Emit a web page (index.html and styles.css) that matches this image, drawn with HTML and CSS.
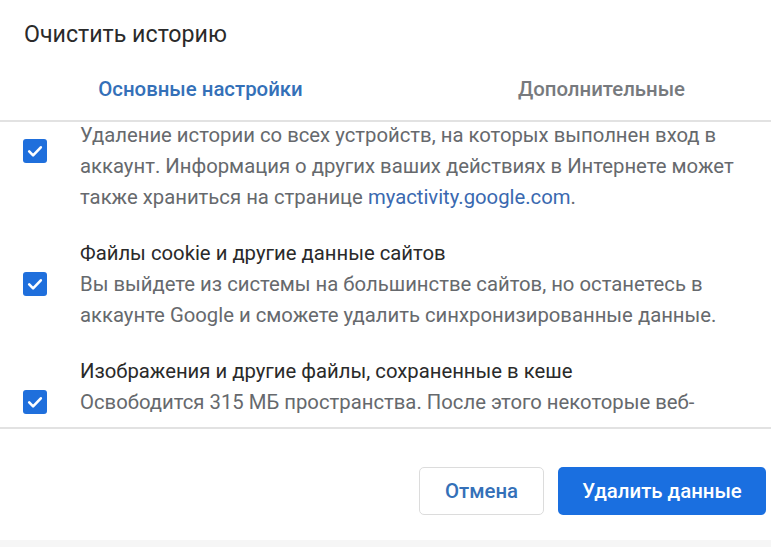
FILE: index.html
```html
<!DOCTYPE html>
<html lang="ru">
<head>
<meta charset="utf-8">
<title>Очистить историю</title>
<link rel="stylesheet" href="styles.css">
</head>
<body>
<div class="dialog">
  <h1 class="title">Очистить историю</h1>
  <div class="tabs">
    <div class="tab tab-active">Основные настройки</div>
    <div class="tab">Дополнительные</div>
  </div>
  <div class="viewport">
    <div class="list">
      <div class="item">
        <span class="check"><svg viewBox="0 0 24 24" width="24" height="24"><path d="M6.2 12.4l3.9 3.9 7.7-8" fill="none" stroke="#fff" stroke-width="2.6" stroke-linecap="round" stroke-linejoin="round"/></svg></span>
        <div class="text">
          <div class="label">История браузера</div>
          <div class="desc">Удаление истории со всех устройств, на которых выполнен вход в аккаунт. Информация о других ваших действиях в Интернете может также храниться на странице <a class="link" href="#">myactivity.google.com</a>.</div>
        </div>
      </div>
      <div class="item">
        <span class="check"><svg viewBox="0 0 24 24" width="24" height="24"><path d="M6.2 12.4l3.9 3.9 7.7-8" fill="none" stroke="#fff" stroke-width="2.6" stroke-linecap="round" stroke-linejoin="round"/></svg></span>
        <div class="text">
          <div class="label">Файлы cookie и другие данные сайтов</div>
          <div class="desc">Вы выйдете из системы на большинстве сайтов, но останетесь в аккаунте Google и сможете удалить синхронизированные данные.</div>
        </div>
      </div>
      <div class="item">
        <span class="check"><svg viewBox="0 0 24 24" width="24" height="24"><path d="M6.2 12.4l3.9 3.9 7.7-8" fill="none" stroke="#fff" stroke-width="2.6" stroke-linecap="round" stroke-linejoin="round"/></svg></span>
        <div class="text">
          <div class="label">Изображения и другие файлы, сохраненные в кеше</div>
          <div class="desc">Освободится 315 МБ пространства. После этого некоторые веб-страницы могут загружаться медленнее.</div>
        </div>
      </div>
    </div>
  </div>
  <div class="footer">
    <button class="btn btn-cancel">Отмена</button>
    <button class="btn btn-primary">Удалить данные</button>
  </div>
  <div class="bottom-strip"></div>
</div>
</body>
</html>
```

FILE: styles.css
```css
html, body {
  margin: 0;
  padding: 0;
  background: #ffffff;
}

body {
  width: 771px;
  height: 547px;
  overflow: hidden;
  font-family: Roboto, "Liberation Sans", Arial, sans-serif;
  color: #202124;
}

.dialog {
  display: flex;
  flex-direction: column;
  width: 771px;
}

.title {
  margin: 0;
  padding: 19px 24px 0;
  font-size: 23.2px;
  line-height: 30px;
  font-weight: 400;
  color: #2a2a2a;
}

.tabs {
  display: grid;
  grid-template-columns: 401px 401px;
  width: 802px;
  padding-top: 28px;
  padding-bottom: 19px;
  border-bottom: 2px solid #e2e2e2;
}

.tab {
  text-align: center;
  font-size: 20.4px;
  line-height: 24px;
  font-weight: 500;
  color: #777a7e;
}

.tab-active {
  color: #3470b8;
}

.viewport {
  height: 305px;
  overflow: hidden;
  border-bottom: 2px solid #e2e2e2;
}

.list {
  display: flex;
  flex-direction: column;
  gap: 25px;
  margin-top: -33.5px;
}

.item {
  display: flex;
  align-items: center;
  gap: 33px;
  padding-left: 23px;
}

.check {
  flex: none;
  display: block;
  width: 24px;
  height: 24px;
  border-radius: 3px;
  background: #1f6fdc;
}

.check svg {
  display: block;
}

.text {
  width: 662px;
  font-size: 20.3px;
  line-height: 31px;
}

.label {
  color: #2a2a2a;
}

.desc {
  color: #66696d;
}

.link {
  color: #3a69b0;
  text-decoration: none;
}

.footer {
  display: flex;
  justify-content: flex-end;
  gap: 14px;
  padding: 38px 5px 25px 0;
}

.btn {
  height: 48px;
  border-radius: 5px;
  font-family: Roboto, "Liberation Sans", Arial, sans-serif;
  font-size: 20.4px;
  font-weight: 500;
  cursor: pointer;
}

.btn-cancel {
  width: 125px;
  background: #ffffff;
  border: 1.5px solid #dcdcdc;
  color: #3470b8;
}

.btn-primary {
  width: 208px;
  background: #1a6fe0;
  border: none;
  color: #ffffff;
}

.bottom-strip {
  height: 7px;
  background: #f6f6f6;
}
```
